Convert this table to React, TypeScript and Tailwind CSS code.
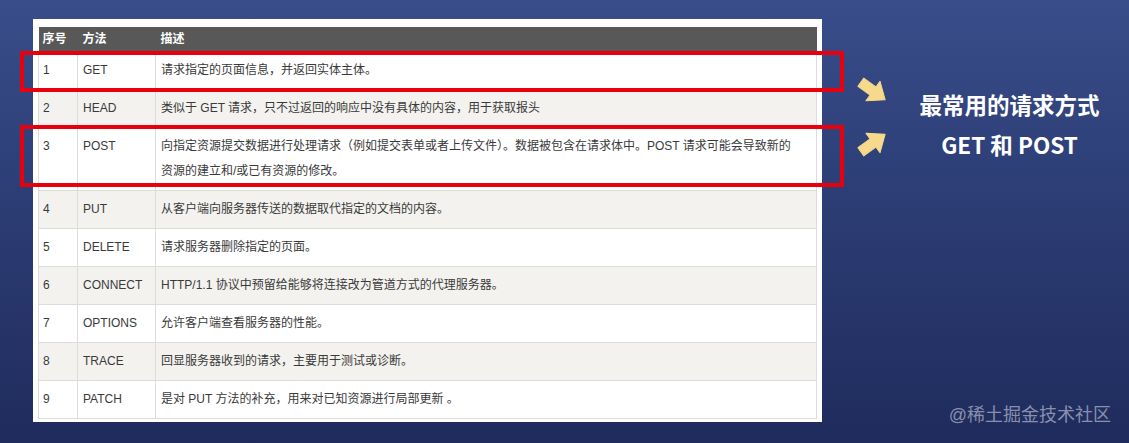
const rows: [string, string, string[]][] = [
  ["1", "GET", ["请求指定的页面信息，并返回实体主体。"]],
  ["2", "HEAD", ["类似于 GET 请求，只不过返回的响应中没有具体的内容，用于获取报头"]],
  [
    "3",
    "POST",
    [
      "向指定资源提交数据进行处理请求（例如提交表单或者上传文件）。数据被包含在请求体中。POST 请求可能会导致新的",
      "资源的建立和/或已有资源的修改。",
    ],
  ],
  ["4", "PUT", ["从客户端向服务器传送的数据取代指定的文档的内容。"]],
  ["5", "DELETE", ["请求服务器删除指定的页面。"]],
  ["6", "CONNECT", ["HTTP/1.1 协议中预留给能够将连接改为管道方式的代理服务器。"]],
  ["7", "OPTIONS", ["允许客户端查看服务器的性能。"]],
  ["8", "TRACE", ["回显服务器收到的请求，主要用于测试或诊断。"]],
  ["9", "PATCH", ["是对 PUT 方法的补充，用来对已知资源进行局部更新 。"]],
];

function Arrow({ rotate }: { rotate: number }) {
  return (
    <svg width="34" height="30" viewBox="0 0 34 30" aria-hidden>
      <g transform={`rotate(${rotate} 17 15)`}>
        <path d="M2 10 H17 V3 L32 15 L17 27 V20 H2 Z" fill="#f7d98b" strokeLinejoin="round" stroke="#f7d98b" strokeWidth="1" />
      </g>
    </svg>
  );
}

export default function App() {
  return (
    <div
      className="relative flex h-[443px] w-[1129px] overflow-hidden bg-gradient-to-b from-[#384d8a] to-[#1f2b5c]"
      style={{ fontFamily: '"Liberation Sans", "Noto Sans CJK SC", sans-serif' }}
    >
      {/* 表格面板 */}
      <div className="relative ml-[33px] mt-[19px] h-[403px] w-[789px] shrink-0">
        <div className="h-full w-full bg-white px-[5px] pb-[3px] pt-[8px]">
          <table className="w-[779px] table-fixed border-collapse text-[12px] text-[#3a3a3a]">
            <colgroup>
              <col className="w-[39px]" />
              <col className="w-[78px]" />
              <col />
            </colgroup>
            <thead>
              <tr className="h-[24px] bg-[#585858] text-left font-bold text-white">
                <th className="px-[4px]">序号</th>
                <th className="px-[5px]">方法</th>
                <th className="px-[5px]">描述</th>
              </tr>
            </thead>
            <tbody>
              {rows.map(([n, m, d], i) => (
                <tr key={n} className={i % 2 === 1 ? "bg-[#f3f2ef]" : "bg-white"}>
                  <td className="border border-[#dcdcdc] px-[4px] py-[6px] align-top leading-[25px]">{n}</td>
                  <td className="border border-[#dcdcdc] px-[5px] py-[6px] align-top leading-[25px]">{m}</td>
                  <td className="border border-[#dcdcdc] px-[5px] py-[6px] align-top leading-[25px]">
                    {d.map((line) => (
                      <div key={line} className="whitespace-nowrap">
                        {line}
                      </div>
                    ))}
                  </td>
                </tr>
              ))}
            </tbody>
          </table>
        </div>
        {/* 红色标注框 */}
        <div className="absolute left-[-13px] top-[32px] h-[41px] w-[824px] border-4 border-[#e8000c]" />
        <div className="absolute left-[-13px] top-[106px] h-[62px] w-[824px] border-4 border-[#e8000c]" />
      </div>

      {/* 箭头 */}
      <div className="ml-[34px] mt-[76px] flex w-[34px] shrink-0 flex-col gap-[22px]">
        <Arrow rotate={36} />
        <Arrow rotate={-36} />
      </div>

      {/* 说明文字 */}
      <div
        className="mt-[84px] flex-1 text-center text-[22.5px] font-bold leading-[40px] text-white"
        style={{ fontFamily: '"Noto Sans CJK SC", sans-serif' }}
      >
        <div>最常用的请求方式</div>
        <div>GET 和 POST</div>
      </div>

      <div
        className="absolute bottom-[14px] right-[18px] text-[18px] text-[#8990ad]"
        style={{ fontFamily: '"Liberation Sans", "Noto Sans CJK SC", sans-serif' }}
      >
        @稀土掘金技术社区
      </div>
    </div>
  );
}
